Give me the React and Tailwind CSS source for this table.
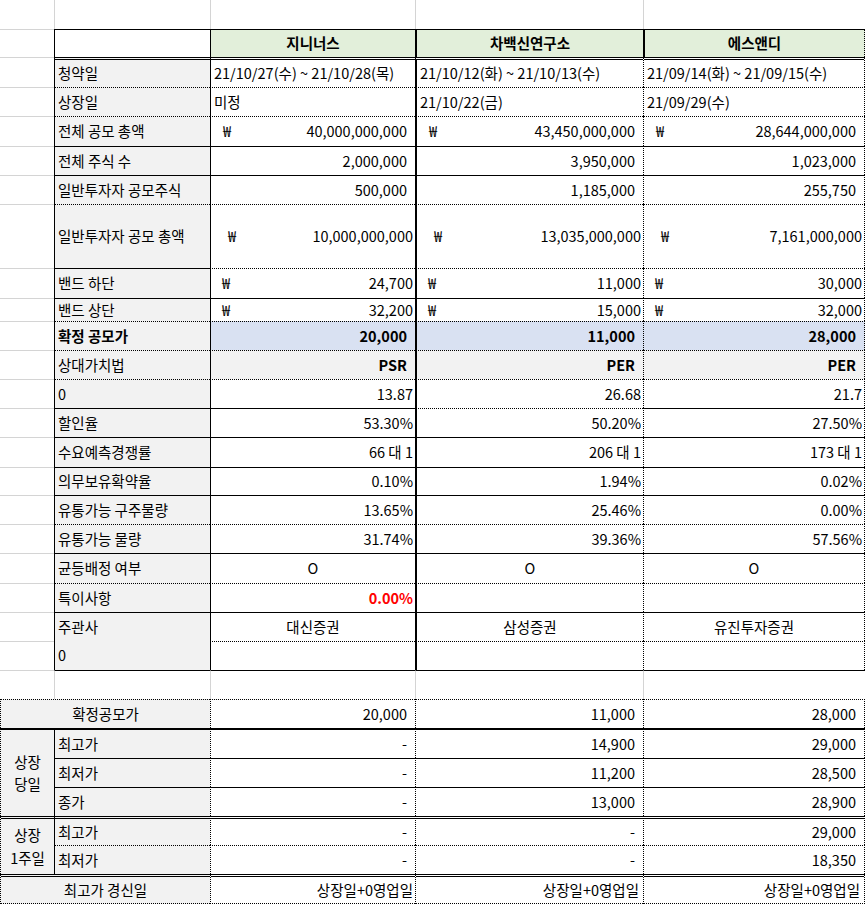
import React from 'react';

// column widths of the sheet
const W = {
  a: 'w-[54px]',
  b: 'w-[156px]',
  c: 'w-[205px]',
  d: 'w-[228px]',
  e: 'w-[222px]',
  ab: 'w-[210px]',
};

const TOP = {
  solid: '[border-top:1px_solid_#000]',
  dot: '[border-top:1px_dotted_#000]',
  dbl: '[border-top:3px_double_#000]',
  thick: '[border-top:2px_solid_#000]',
  gray: '[border-top:1px_solid_#d4d4d4]',
  none: '',
};

const LEFT = {
  solid: '[border-left:1px_solid_#000]',
  dot: '[border-left:1px_dotted_#000]',
  thick: '[border-left:2px_solid_#000]',
  gray: '[border-left:1px_solid_#d4d4d4]',
  none: '',
};

const RIGHT_DOT = '[border-right:1px_dotted_#000]';

const ALIGN = {
  l: 'justify-start pl-[3px]',
  r: 'justify-end pr-[8px]',
  rr: 'justify-end pr-[2px]',
  c: 'justify-center',
  won: 'justify-between pl-[12px] pr-[8px]',
  wonw: 'justify-between pl-[17px] pr-[2px]',
  wonb: 'justify-between pl-[11px] pr-[2px]',
};

const Cell = ({ className = '', children }) => (
  <div className={`flex shrink-0 items-center whitespace-nowrap ${className}`}>{children}</div>
);

const Value = ({ v }) => {
  if (!v) return null;
  const cls = `${v.bold ? 'font-bold' : ''} ${v.red ? 'text-[#ff0000]' : ''}`;
  if (v.k.startsWith('won')) {
    return (
      <>
        <span>₩</span>
        <span className={cls}>{v.s}</span>
      </>
    );
  }
  return <span className={cls}>{v.s}</span>;
};

const mk = (k, s, extra = {}) => ({ k, s, ...extra });

const rows1 = [
  { h: 'h-[30px]', t: ['dbl', 'dbl', 'dbl', 'dbl'], label: '청약일', v: [mk('l', '21/10/27(수) ~ 21/10/28(목)'), mk('l', '21/10/12(화) ~ 21/10/13(수)'), mk('l', '21/09/14(화) ~ 21/09/15(수)')] },
  { h: 'h-[29px]', t: ['dot', 'dot', 'dot', 'dot'], label: '상장일', v: [mk('l', '미정'), mk('l', '21/10/22(금)'), mk('l', '21/09/29(수)')] },
  { h: 'h-[30px]', t: ['dot', 'dot', 'dot', 'dot'], label: '전체 공모 총액', v: [mk('won', '40,000,000,000'), mk('won', '43,450,000,000'), mk('won', '28,644,000,000')] },
  { h: 'h-[29px]', t: ['solid', 'solid', 'solid', 'solid'], label: '전체 주식 수', v: [mk('r', '2,000,000'), mk('r', '3,950,000'), mk('r', '1,023,000')] },
  { h: 'h-[29px]', t: ['solid', 'solid', 'solid', 'solid'], label: '일반투자자 공모주식', v: [mk('r', '500,000'), mk('r', '1,185,000'), mk('r', '255,750')] },
  { h: 'h-[64px]', t: ['dot', 'dot', 'dot', 'dot'], label: '일반투자자 공모 총액', v: [mk('wonw', '10,000,000,000'), mk('wonw', '13,035,000,000'), mk('wonw', '7,161,000,000')] },
  { h: 'h-[30px]', t: ['solid', 'dot', 'dot', 'dot'], label: '밴드 하단', v: [mk('wonb', '24,700'), mk('wonb', '11,000'), mk('wonb', '30,000')] },
  { h: 'h-[23px]', t: ['solid', 'solid', 'solid', 'solid'], label: '밴드 상단', v: [mk('wonb', '32,200'), mk('wonb', '15,000'), mk('wonb', '32,000')] },
  { h: 'h-[29px]', t: ['dot', 'dot', 'dot', 'dot'], label: '확정 공모가', bold: true, bg: 'bg-[#d9e1f2]', v: [mk('r', '20,000', { bold: true }), mk('r', '11,000', { bold: true }), mk('r', '28,000', { bold: true })] },
  { h: 'h-[29px]', t: ['dot', 'dot', 'dot', 'dot'], label: '상대가치법', bg: 'bg-[#f2f2f2]', v: [mk('r', 'PSR', { bold: true }), mk('r', 'PER', { bold: true }), mk('r', 'PER', { bold: true })] },
  { h: 'h-[29px]', t: ['dot', 'dot', 'dot', 'dot'], label: '0', v: [mk('rr', '13.87'), mk('rr', '26.68'), mk('rr', '21.7')] },
  { h: 'h-[29px]', t: ['solid', 'solid', 'dot', 'solid'], label: '할인율', v: [mk('rr', '53.30%'), mk('rr', '50.20%'), mk('rr', '27.50%')] },
  { h: 'h-[30px]', t: ['solid', 'solid', 'solid', 'solid'], label: '수요예측경쟁률', v: [mk('rr', '66 대 1'), mk('rr', '206 대 1'), mk('rr', '173 대 1')] },
  { h: 'h-[28px]', t: ['solid', 'solid', 'solid', 'solid'], label: '의무보유확약율', v: [mk('rr', '0.10%'), mk('rr', '1.94%'), mk('rr', '0.02%')] },
  { h: 'h-[29px]', t: ['solid', 'solid', 'solid', 'solid'], label: '유통가능 구주물량', v: [mk('rr', '13.65%'), mk('rr', '25.46%'), mk('rr', '0.00%')] },
  { h: 'h-[29px]', t: ['dot', 'dot', 'dot', 'dot'], label: '유통가능 물량', v: [mk('rr', '31.74%'), mk('rr', '39.36%'), mk('rr', '57.56%')] },
  { h: 'h-[30px]', t: ['solid', 'solid', 'solid', 'solid'], label: '균등배정 여부', v: [mk('c', 'O'), mk('c', 'O'), mk('c', 'O')] },
  { h: 'h-[29px]', t: ['dot', 'dot', 'dot', 'dot'], label: '특이사항', v: [mk('rr', '0.00%', { bold: true, red: true }), null, null] },
];

const valueCols = [
  { w: W.c, left: LEFT.solid },
  { w: W.d, left: LEFT.thick },
  { w: W.e, left: LEFT.dot },
];

const BodyRow = ({ row }) => (
  <div className={`flex ${row.h}`}>
    <Cell className={`${W.a} ${TOP.gray}`} />
    <Cell className={`${W.b} ${TOP[row.t[0]]} ${LEFT.solid} bg-[#f2f2f2] pl-[3px] ${row.bold ? 'font-bold' : ''}`}>
      {row.label}
    </Cell>
    {valueCols.map((col, i) => {
      const v = row.v[i];
      return (
        <Cell
          key={i}
          className={`${col.w} ${TOP[row.t[i + 1]]} ${col.left} ${i === 2 ? RIGHT_DOT : ''} ${row.bg || ''} ${v ? ALIGN[v.k] : ''}`}
        >
          <Value v={v} />
        </Cell>
      );
    })}
  </div>
);

const rows2 = [
  { h: 'h-[30px]', t: 'thick', label: '최고가', v: ['-', '14,900', '29,000'] },
  { h: 'h-[29px]', t: 'solid', label: '최저가', v: ['-', '11,200', '28,500'] },
  { h: 'h-[29px]', t: 'solid', label: '종가', v: ['-', '13,000', '28,900'] },
];

const rows3 = [
  { h: 'h-[29px]', t: 'dbl', label: '최고가', v: ['-', '-', '29,000'] },
  { h: 'h-[29px]', t: 'dot', label: '최저가', v: ['-', '-', '18,350'] },
];

const ValueCells = ({ t, v, pr = 'pr-[8px]' }) => (
  <>
    <Cell className={`${W.c} ${TOP[t]} ${LEFT.dot} justify-end ${pr}`}>{v[0]}</Cell>
    <Cell className={`${W.d} ${TOP[t]} ${LEFT.dot} justify-end ${pr}`}>{v[1]}</Cell>
    <Cell className={`${W.e} ${TOP[t]} ${LEFT.dot} ${RIGHT_DOT} justify-end ${pr}`}>{v[2]}</Cell>
  </>
);

const Group = ({ title1, title2, rows, h }) => (
  <div className={`flex ${h}`}>
    <div className={`${W.a} ${TOP[rows[0].t]} ${LEFT.dot} bg-[#f2f2f2] flex shrink-0 flex-col items-center justify-center gap-[8px]`}>
      <span>{title1}</span>
      <span>{title2}</span>
    </div>
    <div className="flex flex-col">
      {rows.map((r, i) => (
        <div key={i} className={`flex ${r.h}`}>
          <Cell className={`${W.b} ${TOP[r.t]} ${LEFT.solid} bg-[#f2f2f2] pl-[3px]`}>{r.label}</Cell>
          <ValueCells t={r.t} v={r.v} />
        </div>
      ))}
    </div>
  </div>
);

export default function App() {
  return (
    <div className="w-[865px] h-[905px] overflow-hidden bg-white text-black text-[14.5px] leading-none [font-family:'Noto_Sans_CJK_KR','Noto_Sans',sans-serif]">
      {/* blank first row of the sheet */}
      <div className="flex h-[29px]">
        <Cell className={W.a} />
        <Cell className={`${W.b} ${LEFT.gray}`} />
        <Cell className={`${W.c} ${LEFT.gray}`} />
        <Cell className={`${W.d} ${LEFT.gray}`} />
        <Cell className={`${W.e} ${LEFT.gray}`} />
      </div>

      {/* header */}
      <div className="flex h-[28px] font-bold">
        <Cell className={`${W.a} ${TOP.gray}`} />
        <Cell className={`${W.b} ${TOP.solid} ${LEFT.solid}`} />
        <Cell className={`${W.c} ${TOP.solid} ${LEFT.solid} bg-[#e2efda] justify-center`}>지니너스</Cell>
        <Cell className={`${W.d} ${TOP.solid} ${LEFT.thick} bg-[#e2efda] justify-center`}>차백신연구소</Cell>
        <Cell className={`${W.e} ${TOP.solid} ${LEFT.thick} ${RIGHT_DOT} bg-[#e2efda] justify-center`}>에스앤디</Cell>
      </div>

      {rows1.map((row, i) => (
        <BodyRow key={i} row={row} />
      ))}

      {/* 주관사 block, label cell spans two rows */}
      <div className="flex h-[58px]">
        <div className="flex flex-col">
          <Cell className={`${W.a} h-[29px] ${TOP.gray}`} />
          <Cell className={`${W.a} h-[29px] ${TOP.gray}`} />
        </div>
        <div className={`${W.b} ${TOP.solid} ${LEFT.solid} bg-[#f2f2f2] pl-[3px] flex shrink-0 flex-col`}>
          <div className="flex h-[28px] items-center">주관사</div>
          <div className="flex h-[29px] items-center">0</div>
        </div>
        <div className="flex flex-col">
          <div className="flex h-[29px]">
            <Cell className={`${W.c} ${TOP.solid} ${LEFT.solid} justify-center`}>대신증권</Cell>
            <Cell className={`${W.d} ${TOP.solid} ${LEFT.thick} justify-center`}>삼성증권</Cell>
            <Cell className={`${W.e} ${TOP.solid} ${LEFT.dot} ${RIGHT_DOT} justify-center`}>유진투자증권</Cell>
          </div>
          <div className="flex h-[29px]">
            <Cell className={`${W.c} ${TOP.dot} ${LEFT.solid}`} />
            <Cell className={`${W.d} ${TOP.dot} ${LEFT.thick}`} />
            <Cell className={`${W.e} ${TOP.dot} ${LEFT.dot} ${RIGHT_DOT}`} />
          </div>
        </div>
      </div>

      {/* empty spacer row */}
      <div className="flex h-[29px]">
        <Cell className={`${W.a} ${TOP.gray}`} />
        <Cell className={`${W.b} ${TOP.solid} ${LEFT.gray}`} />
        <Cell className={`${W.c} ${TOP.solid} ${LEFT.gray}`} />
        <Cell className={`${W.d} ${TOP.solid} ${LEFT.gray}`} />
        <Cell className={`${W.e} ${TOP.solid} ${LEFT.gray}`} />
      </div>

      {/* listing-day price table */}
      <div className="flex h-[29px]">
        <Cell className={`${W.ab} ${TOP.dot} ${LEFT.dot} bg-[#f2f2f2] justify-center`}>확정공모가</Cell>
        <ValueCells t="dot" v={['20,000', '11,000', '28,000']} />
      </div>

      <Group title1="상장" title2="당일" rows={rows2} h="h-[88px]" />
      <Group title1="상장" title2="1주일" rows={rows3} h="h-[58px]" />

      <div className="flex h-[30px]">
        <Cell className={`${W.ab} ${TOP.dbl} ${LEFT.dot} bg-[#f2f2f2] justify-center [border-bottom:1px_dotted_#000]`}>
          최고가 경신일
        </Cell>
        <Cell className={`${W.c} ${TOP.dbl} ${LEFT.dot} justify-end pr-[2px] [border-bottom:1px_dotted_#000]`}>상장일+0영업일</Cell>
        <Cell className={`${W.d} ${TOP.dbl} ${LEFT.dot} justify-end pr-[4px] [border-bottom:1px_dotted_#000]`}>상장일+0영업일</Cell>
        <Cell className={`${W.e} ${TOP.dbl} ${LEFT.dot} ${RIGHT_DOT} justify-end pr-[4px] [border-bottom:1px_dotted_#000]`}>상장일+0영업일</Cell>
      </div>
    </div>
  );
}
